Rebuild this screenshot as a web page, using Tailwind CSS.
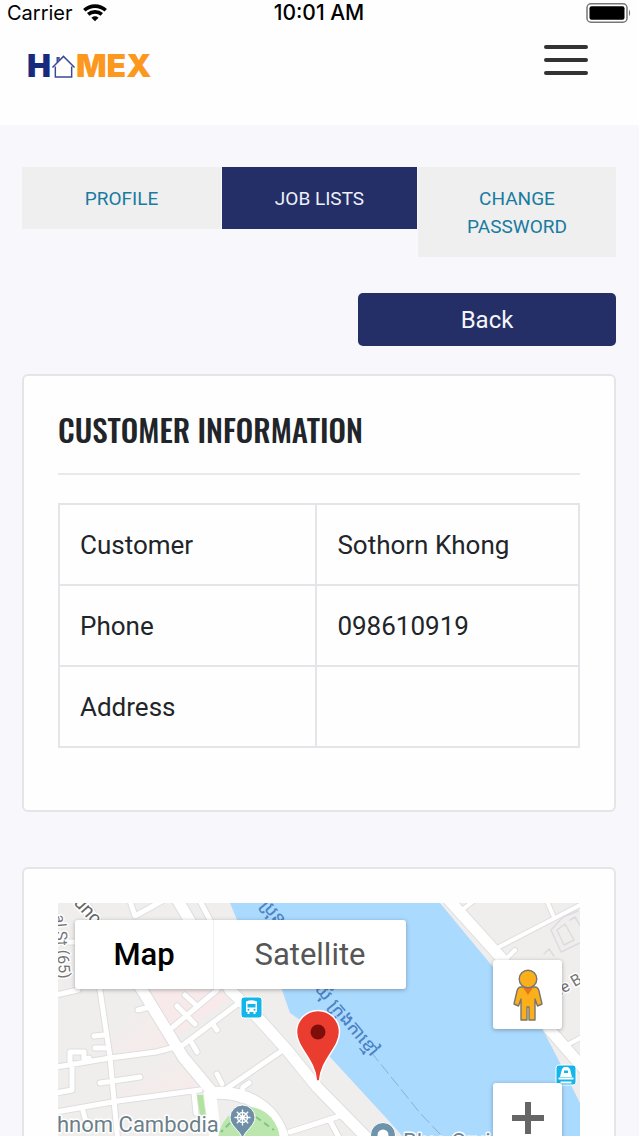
<!DOCTYPE html>
<html lang="en">

<head>
    <meta charset="UTF-8">
    <meta name="viewport" content="width=device-width, initial-scale=1.0">
    <title>Homex - Customer Information</title>
    <script src="https://cdn.jsdelivr.net/npm/@tailwindcss/browser@4"></script>
</head>

<body class="flex h-screen flex-col overflow-hidden bg-[#f8f8fc] font-['Roboto',sans-serif] text-[#212529]">
    <!-- Status bar -->
    <div class="grid shrink-0 grid-cols-3 items-center bg-[#fefefe] pt-px pr-2 pl-[7px] font-['Inter',sans-serif] text-xl leading-6 text-black">
        <div class="flex items-center gap-[10px]">
            <span>Carrier</span>
            <svg class="h-[18px] w-6" viewBox="0 0 24 18" fill="none" stroke="#000" stroke-width="3.6">
                <path d="M1.3 6.3C7.3 .7 16.7 .7 22.7 6.3" />
                <path d="M5.2 10.4C9 7 15 7 18.8 10.4" />
                <path d="M12 17.3L8.4 13.7Q12 11 15.6 13.7Z" fill="#000" stroke="none" />
            </svg>
        </div>
        <span class="text-center text-[21px] font-medium">10:01 AM</span>
        <svg class="h-5 w-[45px] justify-self-end" viewBox="0 0 45 20">
            <rect x="1" y=".8" width="40" height="18.4" rx="4" fill="#fff" stroke="#777" stroke-width="1.5" />
            <rect x="3.5" y="3.3" width="35" height="13.4" rx="2" />
            <path d="M43 6.500q2.400 3.500 0 7z" fill="#777" />
        </svg>
    </div>

    <header class="flex h-[100px] shrink-0 items-start justify-between bg-[#fefefe] pt-[18px] pr-[51px] pl-[27px]">
        <a href="#" aria-label="Homex" class="mt-2 flex items-center font-['Inter',sans-serif] text-[32px] leading-[30px] font-black">
            <span class="text-[#172a7c]">H</span>
            <svg class="h-[26px] w-[25px]" viewBox="0 0 26 26" fill="none" stroke="#3a4995" stroke-width="1.5">
                <path d="M1.5 14.5L13 3L24.5 14.5M4.5 13.5V24.5H21.5V13.5M6.5 9V4.5H8.3V7.3" />
            </svg>
            <span class="text-[#fb981d]">MEX</span>
        </a>
        <button aria-label="Menu" class="flex w-11 flex-col gap-[9px] py-[2px]">
            <span class="h-1 w-full rounded-full bg-[#333]"></span>
            <span class="h-1 w-full rounded-full bg-[#333]"></span>
            <span class="h-1 w-full rounded-full bg-[#333]"></span>
        </button>
    </header>

    <main class="px-[23px] pt-[42px] pl-[22px]">
        <nav class="grid grid-cols-[199fr_195fr_198fr] items-start gap-px text-center text-[19px] leading-7 text-[#197ba0]">
            <a href="#" class="bg-[#efeff0] pt-[18px] pb-4">PROFILE</a>
            <a href="#" class="bg-[#232f66] pt-[18px] pb-4 text-[#eef0fa]">JOB LISTS</a>
            <a href="#" class="bg-[#efefef] px-10 pt-[18px] pb-4">CHANGE PASSWORD</a>
        </nav>

        <div class="mt-9 flex justify-end">
            <button class="h-[53px] w-[258px] rounded-[5px] bg-[#232f66] text-2xl text-[#f4f5fb]">Back</button>
        </div>

        <!-- Customer card -->
        <section class="mt-7 rounded-md border-2 border-[#e4e5e9] bg-[#fefefe] px-[34px] pt-[30px] pb-[62px]">
            <h2 class="font-['Oswald','Roboto_Condensed',sans-serif] text-[31px] leading-[46px] font-medium whitespace-nowrap">CUSTOMER INFORMATION</h2>
            <hr class="mt-[21px] mb-7 border-t-2 border-[#e8e9eb]">
            <table class="w-full table-fixed border-collapse text-left text-[26px] leading-9">
                <tr>
                    <th class="h-[81px] w-[49.5%] border-2 border-[#e4e5e9] px-5 font-normal">Customer</th>
                    <td class="border-2 border-[#e4e5e9] px-5">Sothorn Khong</td>
                </tr>
                <tr>
                    <th class="h-[81px] border-2 border-[#e4e5e9] px-5 font-normal">Phone</th>
                    <td class="border-2 border-[#e4e5e9] px-5">098610919</td>
                </tr>
                <tr>
                    <th class="h-[81px] border-2 border-[#e4e5e9] px-5 font-normal">Address</th>
                    <td class="border-2 border-[#e4e5e9] px-5"></td>
                </tr>
            </table>
        </section>

        <!-- Map card -->
        <section class="mt-[55px] rounded-md border-2 border-[#e4e5e9] bg-[#fefefe] p-[34px]">
            <div class="relative h-[400px] overflow-hidden bg-[#efeeed]">
                <svg class="absolute top-0 left-0 h-[400px] w-full" viewBox="0 0 522 400" preserveAspectRatio="xMinYMin slice">
                    <defs>
                        <linearGradient id="pink" x1="0" y1="0" x2="1" y2="1">
                            <stop offset=".3" stop-color="#efeeed" />
                            <stop offset="1" stop-color="#faeaea" />
                        </linearGradient>
                    </defs>
                    <!-- blocks -->
                    <path d="M88 87H185L118 132Z" fill="#f8eaea" />
                    <path d="M45 90L84 87L125 145L50 152Z" fill="url(#pink)" />
                    <path d="M50 160L118 147L145 187L60 200Z" fill="url(#pink)" />
                    <!-- river -->
                    <path d="M172 0L179 17L224 87L232 110L242 117L272 154L330 217L370 262V400H560V262L522 200L499 154L485 127L435 64L382 0Z" fill="#abdaff" />
                    <path d="M313 149L362 210L400 250" fill="none" stroke="#8ab0d4" stroke-dasharray="12 4" />

                    <!-- roads: grey casing first, white on top -->
                    <g fill="none" stroke-linejoin="round" stroke-linecap="round">
                        <g stroke="#dfdedf">
                            <path stroke-width="7" d="M42 87L52 154L60 240M-2 92L20 87M-2 39H19M-2 164L52 155L98 149L125 142L185 97M-2 209L60 198L142 187M42 180L82 174M80 107L92 104M36 133L46 132M37 145H47M12 162V149H26V157L31 155M14 164V187L-2 190M25 208L29 222M136 190L138 210M115 124L159 87M119 103L137 121M127 92L139 103M154 120L159 127M134 140L139 149M159 171L164 181M162 190L225 147M72 -2L77 13L104 -2M142 -2L152 17M185 184L191 180M185 184L183 197M232 229L285 212M271 216L284 240" />
                            <path stroke-width="6" d="M439 45L526 0M457 47L449 55M489 -2L495 12M404 7L418 -4M509 142L526 133" />
                            <path stroke-width="13" d="M22 -4L84 87L125 154L155 190M119 -4L172 87L202 117L229 147L259 184L310 236L345 270M390 -4L445 57L492 127L526 166" />
                            <path stroke-width="14" d="M155 190C182 188 218 200 226 240" />
                        </g>
                        <g stroke="#fff">
                            <path stroke-width="5" d="M42 87L52 154L60 240M-2 92L20 87M-2 39H19M-2 164L52 155L98 149L125 142L185 97M-2 209L60 198L142 187M42 180L82 174M80 107L92 104M36 133L46 132M37 145H47M12 162V149H26V157L31 155M14 164V187L-2 190M25 208L29 222M136 190L138 210M115 124L159 87M119 103L137 121M127 92L139 103M154 120L159 127M134 140L139 149M159 171L164 181M162 190L225 147M72 -2L77 13L104 -2M142 -2L152 17M185 184L191 180M185 184L183 197M232 229L285 212M271 216L284 240" />
                            <path stroke-width="4" d="M439 45L526 0M457 47L449 55M489 -2L495 12M404 7L418 -4M509 142L526 133" />
                            <path stroke-width="11" d="M22 -4L84 87L125 154L155 190M119 -4L172 87L202 117L229 147L259 184L310 236L345 270M390 -4L445 57L492 127L526 166" />
                            <path stroke-width="12" d="M155 190C182 188 218 200 226 240M152 190L158 240" />
                        </g>
                        <path stroke="#dcdce0" stroke-width="1.5" d="M493 27L505 14L520 8M493 27L503 49L526 38M499 27L507 21L516 37L506 42ZM512 17L517 14L523 24M486 51L491 46L496 53" />
                    </g>
                    <!-- park -->
                    <path d="M139 192L145 192L148 214L142 212Z" fill="#b2e2a0" />
                    <ellipse cx="191" cy="239" rx="31" ry="35" fill="#bbe6ad" />
                    <path d="M198 214L216 227M172 220L163 229" stroke="#80c783" stroke-width="2" stroke-dasharray="6 4" />

                    <!-- labels -->
                    <g font-family="Roboto, sans-serif" stroke="#fff" stroke-width="3" paint-order="stroke" stroke-linejoin="round">
                        <text x="-1" y="229" font-size="22" fill="#6c7f89">hnom Cambodia</text>
                        <text x="345" y="246" font-size="22" fill="#6c8497">Blue Cruise</text>
                        <text transform="translate(15 0) rotate(48)" font-size="19" fill="#666">unc</text>
                        <text transform="translate(-4 12) rotate(85)" font-size="16" fill="#757575">al St (65)</text>
                        <text transform="translate(498 95) rotate(-30)" font-size="16" fill="#757575">ne B</text>
                    </g>
                    <g font-family="'Noto Sans Khmer', 'Noto Sans', sans-serif" font-size="18" font-weight="500" fill="#4d82c4">
                        <text transform="translate(202 2) rotate(50)">ប្រុន</text>
                        <text transform="translate(256 86) rotate(50)">ឃុំ ក្រុងកាខ្មៅ</text>
                    </g>

                    <!-- bus stop -->
                    <rect x="183" y="94" width="21" height="21" rx="3" fill="#13b5ea" stroke="#fff" />
                    <path d="M188 98.5Q193.5 96 199 98.5V109H197.5V111H195.5V109H191.5V111H189.5V109H188Z" fill="#fff" />
                    <path d="M189.5 101H197.5V104.5H189.5Z" fill="#13b5ea" />
                    <circle cx="190.5" cy="106.8" r="1" fill="#13b5ea" />
                    <circle cx="196.5" cy="106.8" r="1" fill="#13b5ea" />

                    <!-- ferry -->
                    <rect x="498" y="162" width="20" height="20" rx="3" fill="#13b5ea" stroke="#fff" />
                    <path d="M504 166L506 164H510L512 166L514 174H502Z" fill="#fff" />
                    <path d="M506 167.5H510V170H506Z" fill="#13b5ea" />
                    <path d="M500.5 175.5H515.5M502.5 179.5H513.5" stroke="#fff" stroke-width="2" />

                    <!-- temple -->
                    <path d="M184.5 202A12.5 12.5 0 0 1 197 214.5C197 223 187 227 184.5 236C182 227 172 223 172 214.5A12.5 12.5 0 0 1 184.5 202Z" fill="#6e8fa6" stroke="#fff" />
                    <g transform="translate(184.5 214.5)" fill="none" stroke="#fff" stroke-width="1.3">
                        <circle r="5" />
                        <circle r="1.5" fill="#fff" />
                        <path d="M0 -8V8M-8 0H8M-5.7 -5.7L5.7 5.7M-5.7 5.7L5.7 -5.7" />
                    </g>
                    <circle cx="325" cy="232" r="12.5" fill="#6e94ab" stroke="#fff" />
                    <circle cx="325" cy="232" r="5.5" fill="#fff" />

                    <!-- customer location -->
                    <path d="M260 107.5A21.5 21.5 0 0 1 281.5 129C281.5 145 263 156 261.5 178H258.5C257 156 238.5 145 238.5 129A21.5 21.5 0 0 1 260 107.5Z" fill="#ea3d2f" stroke="#fff" stroke-width="1.5" />
                    <circle cx="260" cy="129" r="7.5" fill="#7f0e0b" />
                </svg>

                <div class="absolute top-[17px] left-[17px] flex rounded-[3px] bg-white text-[31px] leading-[69px] shadow-[0_1px_4px_rgba(0,0,0,0.3)]">
                    <button class="w-[139px] border-r border-[#f0f0f0] font-medium text-black">Map</button>
                    <button class="w-48 text-[#565656]">Satellite</button>
                </div>

                <div class="absolute top-[57px] right-[18px] flex flex-col gap-[54px]">
                    <button aria-label="Street View" class="flex size-[69px] items-center justify-center rounded-[3px] bg-white shadow-[0_1px_4px_rgba(0,0,0,0.3)]">
                        <svg class="h-[52px] w-[30px]" viewBox="0 0 30 52" fill="#fbb01b" stroke="#77756d" stroke-width="1.4" stroke-linejoin="round">
                            <path d="M8 18H22Q25 18 26 22L29 35L24.5 37L22 30V51H16V38H14V51H8V30L5.500 37L1 35L4 22Q5 18 8 18Z" />
                            <path d="M10 18.5H20L15 26Z" fill="#e67422" stroke="none" />
                            <circle cx="15" cy="10" r="8.8" />
                        </svg>
                    </button>
                    <button aria-label="Zoom in" class="flex size-[69px] items-center justify-center rounded-[3px] bg-white shadow-[0_1px_4px_rgba(0,0,0,0.3)]">
                        <svg class="size-8" viewBox="0 0 32 32" stroke="#666" stroke-width="6">
                            <path d="M16 0V32M0 16H32" />
                        </svg>
                    </button>
                </div>
            </div>
        </section>
    </main>
</body>

</html>
